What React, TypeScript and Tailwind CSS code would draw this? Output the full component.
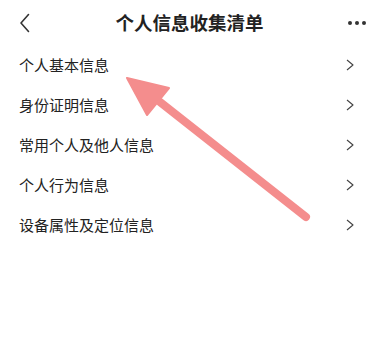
import React from 'react';

const items = ['个人基本信息', '身份证明信息', '常用个人及他人信息', '个人行为信息', '设备属性及定位信息'];

const font = { fontFamily: '"Noto Sans CJK SC", "Noto Sans", sans-serif' };

const App: React.FC = () => {
  return (
    <div className="relative w-[375px] h-[352px] bg-white overflow-hidden" style={font}>
      <div className="relative flex items-center justify-between h-[45px] px-[18px]">
        <svg width="12" height="20" viewBox="0 0 12 20" className="ml-[1px]">
          <path d="M9.5 1.5 L2 10 L9.5 18.5" fill="none" stroke="#333" strokeWidth="1.6" strokeLinecap="round" strokeLinejoin="round" />
        </svg>
        <div className="absolute left-0 right-0 text-center text-[18.5px] font-bold text-[#222] pl-[4px] pointer-events-none">
          个人信息收集清单
        </div>
        <div className="flex gap-[3px] mr-[-9px]">
          <span className="w-[4px] h-[4px] rounded-full bg-[#333]" />
          <span className="w-[4px] h-[4px] rounded-full bg-[#333]" />
          <span className="w-[4px] h-[4px] rounded-full bg-[#333]" />
        </div>
      </div>
      <div className="flex flex-col">
        {items.map((t) => (
          <div key={t} className="flex items-center justify-between h-[40px] pl-[19px] pr-[21px]">
            <span className="text-[15px] text-[#222]">{t}</span>
            <svg width="8" height="12" viewBox="0 0 8 12">
              <path d="M1 1 L7 6 L1 11" fill="none" stroke="#444" strokeWidth="1.1" strokeLinejoin="round" />
            </svg>
          </div>
        ))}
      </div>
      <svg className="absolute left-0 top-0 pointer-events-none" width="375" height="352" viewBox="0 0 375 352">
        <line x1="160" y1="102" x2="306" y2="217" stroke="#f48d8d" strokeWidth="8" strokeLinecap="round" />
        <polygon points="127,78 169,88 147,115" fill="#f48d8d" stroke="#f48d8d" strokeWidth="2" strokeLinejoin="round" />
      </svg>
    </div>
  );
};

export default App;
